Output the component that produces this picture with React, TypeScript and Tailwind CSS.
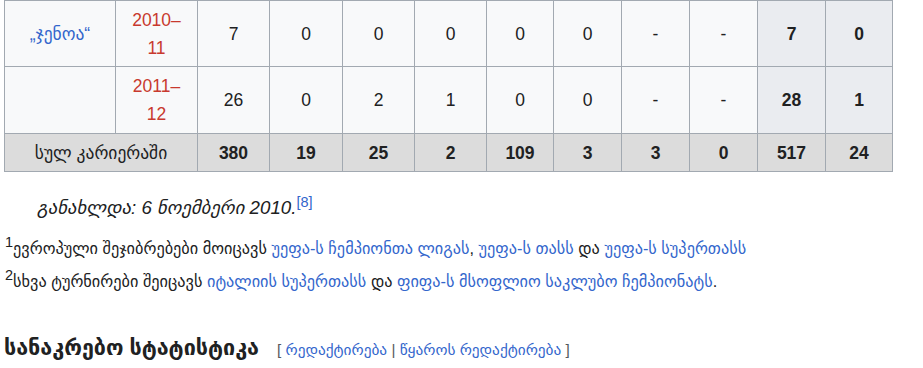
import React from "react";

const link = "text-[#3366cc]";
const red = "text-[#c8392e]";

const widths = [111, 82, 72, 73, 72, 72, 67, 68, 68, 68, 68, 67];

function Cell({
  children,
  bold,
  dark,
}: {
  children?: React.ReactNode;
  bold?: boolean;
  dark?: boolean;
}) {
  return (
    <td
      className={`border border-[#a2a9b1] px-[5px] py-[4px] text-center align-middle leading-[28px] ${
        dark ? "bg-[#eaecf0]" : "bg-[#f8f9fa]"
      } ${bold ? "font-bold" : ""}`}
    >
      {children}
    </td>
  );
}

function TotalCell({ children, colSpan }: { children: React.ReactNode; colSpan?: number }) {
  return (
    <td
      colSpan={colSpan}
      className="border border-[#a2a9b1] bg-[#dcdcdc] px-[5px] py-[4px] text-center align-middle font-bold leading-[28px]"
    >
      {children}
    </td>
  );
}

export default function App() {
  const r1 = ["7", "0", "0", "0", "0", "0", "-", "-"];
  const r2 = ["26", "0", "2", "1", "0", "0", "-", "-"];
  const tot = ["380", "19", "25", "2", "109", "3", "3", "0", "517", "24"];
  return (
    <div
      className="w-[923px] h-[368px] overflow-hidden bg-white text-[#202122] text-[17.5px]"
      style={{ fontFamily: '"Liberation Sans", "DejaVu Sans", sans-serif' }}
    >
      <table className="ml-[4px] table-fixed border-collapse w-[889px]">
        <colgroup>
          {widths.map((w, i) => (
            <col key={i} style={{ width: w }} />
          ))}
        </colgroup>
        <tbody>
          <tr className="h-[66px]">
            <Cell>
              <span className={link}>„ჯენოა“</span>
            </Cell>
            <Cell>
              <span className={red}>
                2010–
                <br />
                11
              </span>
            </Cell>
            {r1.map((v, i) => (
              <Cell key={i}>{v}</Cell>
            ))}
            <Cell bold dark>
              7
            </Cell>
            <Cell bold dark>
              0
            </Cell>
          </tr>
          <tr className="h-[67px]">
            <Cell></Cell>
            <Cell>
              <span className={red}>
                2011–
                <br />
                12
              </span>
            </Cell>
            {r2.map((v, i) => (
              <Cell key={i}>{v}</Cell>
            ))}
            <Cell bold dark>
              28
            </Cell>
            <Cell bold dark>
              1
            </Cell>
          </tr>
          <tr className="h-[38px]">
            <TotalCell colSpan={2}>
              <span className="font-normal">სულ კარიერაში</span>
            </TotalCell>
            {tot.map((v, i) => (
              <TotalCell key={i}>{v}</TotalCell>
            ))}
          </tr>
        </tbody>
      </table>

      <div className="mt-[22px] pl-[37px] text-[18.7px] italic leading-[28px]">
        განახლდა: 6 ნოემბერი 2010.
        <sup className={`${link} not-italic text-[14.5px]`}>[8]</sup>
      </div>

      <div className="mt-[10px] pl-[5px] text-[16.3px] leading-[33px]">
        <div>
          <sup className="text-[14.5px]">1</sup>ევროპული შეჯიბრებები მოიცავს{" "}
          <span className={link}>უეფა-ს ჩემპიონთა ლიგას</span>,{" "}
          <span className={link}>უეფა-ს თასს</span> და{" "}
          <span className={link}>უეფა-ს სუპერთასს</span>
        </div>
        <div>
          <sup className="text-[14.5px]">2</sup>სხვა ტურნირები შეიცავს{" "}
          <span className={link}>იტალიის სუპერთასს</span> და{" "}
          <span className={link}>ფიფა-ს მსოფლიო საკლუბო ჩემპიონატს</span>.
        </div>
      </div>

      <div className="mt-[34px] pl-[4px] flex items-baseline">
        <span className="text-[21.5px] font-bold">სანაკრებო სტატისტიკა</span>
        <span className="ml-[18px] text-[15.3px] text-[#54595d]">
          [ <span className={link}>რედაქტირება</span> |{" "}
          <span className={link}>წყაროს რედაქტირება</span> ]
        </span>
      </div>
    </div>
  );
}
